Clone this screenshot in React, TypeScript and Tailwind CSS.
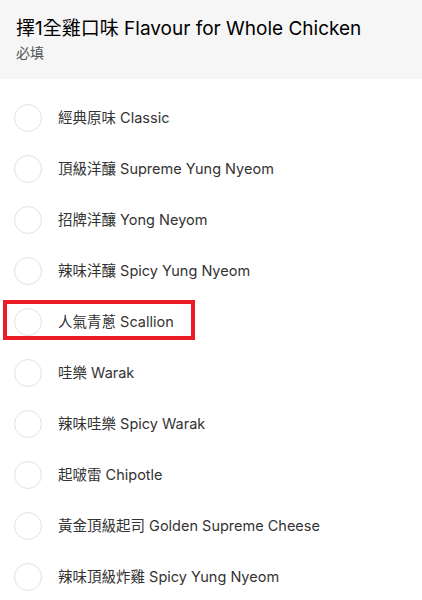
const options = [
  '經典原味 Classic',
  '頂級洋釀 Supreme Yung Nyeom',
  '招牌洋釀 Yong Neyom',
  '辣味洋釀 Spicy Yung Nyeom',
  '人氣青蔥 Scallion',
  '哇樂 Warak',
  '辣味哇樂 Spicy Warak',
  '起啵雷 Chipotle',
  '黃金頂級起司 Golden Supreme Cheese',
  '辣味頂級炸雞 Spicy Yung Nyeom',
]

export default function App() {
  return (
    <div
      className="w-[422px] h-[600px] overflow-hidden bg-white text-black"
      style={{ fontFamily: 'Inter, "Noto Sans CJK TC", sans-serif' }}
    >
      <div className="h-[79px] bg-[#f6f6f6] px-4 pt-[17px]">
        <h2 className="text-[19px] leading-[24px] font-normal text-black">擇1全雞口味 Flavour for Whole Chicken</h2>
        <p className="mt-[3px] text-[14px] leading-[18px] text-[#545454]">必填</p>
      </div>

      <ul className="pt-[13px]">
        {options.map((label, index) => (
          <li key={label} className="relative flex h-[51px] items-center gap-4 px-[14px]">
            <span className="h-[28px] w-[28px] shrink-0 rounded-full border border-[#e2e2e2] bg-white" />
            <span className="text-[14.5px] leading-5 text-[#333]">{label}</span>
            {index === 4 && (
              <span className="pointer-events-none absolute left-[3px] top-[4px] h-[40px] w-[192px] border-4 border-[#ec1c24]" />
            )}
          </li>
        ))}
      </ul>
    </div>
  )
}
